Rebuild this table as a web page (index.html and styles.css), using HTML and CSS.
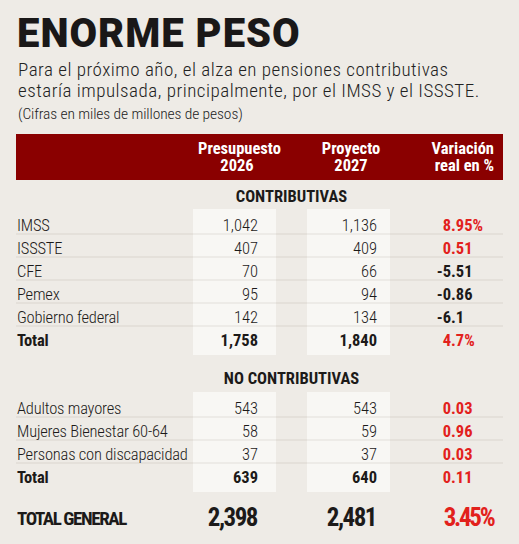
FILE: index.html
```html
<!DOCTYPE html>
<html lang="es">
<head>
<meta charset="utf-8">
<link rel="stylesheet" href="styles.css">
</head>
<body>
<div class="page">
  <h1 class="title">ENORME PESO</h1>
  <p class="lede">Para el próximo año, el alza en pensiones contributivas<br>estaría impulsada, principalmente, por el IMSS y el ISSSTE.</p>
  <p class="note">(Cifras en miles de millones de pesos)</p>

  <div class="table">
    <div class="row head">
      <div class="cell"></div>
      <div class="cell hc">Presupuesto<br>2026</div>
      <div class="cell"></div>
      <div class="cell hc">Proyecto<br>2027</div>
      <div class="cell hv">Variación<br>real en %</div>
    </div>

    <div class="row stitle"><div class="cell"></div><div class="cell span3">CONTRIBUTIVAS</div><div class="cell"></div></div>
    <div class="row cap top"><div class="cell"></div><div class="cell box"></div><div class="cell"></div><div class="cell box"></div><div class="cell"></div></div>
    <div class="row sep"><div class="cell lab">IMSS</div><div class="cell box n1">1,042</div><div class="cell"></div><div class="cell box n2">1,136</div><div class="cell var red"><span class="int">8</span>.95%</div></div>
    <div class="row sep"><div class="cell lab">ISSSTE</div><div class="cell box n1">407</div><div class="cell"></div><div class="cell box n2">409</div><div class="cell var red"><span class="int">0</span>.51</div></div>
    <div class="row sep"><div class="cell lab">CFE</div><div class="cell box n1">70</div><div class="cell"></div><div class="cell box n2">66</div><div class="cell var"><span class="int">-5</span>.51</div></div>
    <div class="row sep"><div class="cell lab">Pemex</div><div class="cell box n1">95</div><div class="cell"></div><div class="cell box n2">94</div><div class="cell var"><span class="int">-0</span>.86</div></div>
    <div class="row sep"><div class="cell lab">Gobierno federal</div><div class="cell box n1">142</div><div class="cell"></div><div class="cell box n2">134</div><div class="cell var"><span class="int">-6</span>.1</div></div>
    <div class="row total"><div class="cell lab">Total</div><div class="cell box n1">1,758</div><div class="cell"></div><div class="cell box n2">1,840</div><div class="cell var red"><span class="int">4</span>.7%</div></div>
    <div class="row cap bottom"><div class="cell"></div><div class="cell box"></div><div class="cell"></div><div class="cell box"></div><div class="cell"></div></div>

    <div class="row stitle second"><div class="cell"></div><div class="cell span3">NO CONTRIBUTIVAS</div><div class="cell"></div></div>
    <div class="row cap top"><div class="cell"></div><div class="cell box"></div><div class="cell"></div><div class="cell box"></div><div class="cell"></div></div>
    <div class="row sep"><div class="cell lab">Adultos mayores</div><div class="cell box n1">543</div><div class="cell"></div><div class="cell box n2">543</div><div class="cell var red"><span class="int">0</span>.03</div></div>
    <div class="row sep"><div class="cell lab">Mujeres Bienestar 60-64</div><div class="cell box n1">58</div><div class="cell"></div><div class="cell box n2">59</div><div class="cell var red"><span class="int">0</span>.96</div></div>
    <div class="row sep"><div class="cell lab">Personas con discapacidad</div><div class="cell box n1">37</div><div class="cell"></div><div class="cell box n2">37</div><div class="cell var red"><span class="int">0</span>.03</div></div>
    <div class="row total"><div class="cell lab">Total</div><div class="cell box n1">639</div><div class="cell"></div><div class="cell box n2">640</div><div class="cell var red"><span class="int">0</span>.11</div></div>
    <div class="row cap bottom"><div class="cell"></div><div class="cell box"></div><div class="cell"></div><div class="cell box"></div><div class="cell"></div></div>

    <div class="row grand"><div class="cell lab">TOTAL GENERAL</div><div class="cell n1">2,398</div><div class="cell"></div><div class="cell n2">2,481</div><div class="cell var red"><span class="int">3</span>.45%</div></div>
  </div>
</div>
</body>
</html>
```
FILE: styles.css
```css
html, body {
  margin: 0;
  padding: 0;
  background: #eeebe6;
}
.page {
  width: 519px;
  height: 544px;
  box-sizing: border-box;
  padding: 14px 16px 0 16px;
  color: #1c1a19;
  font-family: Roboto, "Liberation Sans", sans-serif;
  overflow: hidden;
}
.title {
  margin: 0 0 0 1px;
  font-size: 40px;
  line-height: 40px;
  font-weight: 900;
  letter-spacing: 1px;
  color: #1a1818;
}
.lede {
  margin: 6px 0 0 2px;
  font-size: 19px;
  line-height: 20.5px;
  font-weight: 300;
  font-stretch: 75%;
  letter-spacing: 0.5px;
  color: #222;
  white-space: nowrap;
}
.note {
  margin: 4px 0 0 2px;
  font-size: 15.5px;
  line-height: 18px;
  font-weight: 300;
  font-stretch: 75%;
  letter-spacing: -0.1px;
  color: #222;
}
.table {
  margin-top: 11px;
  width: 487px;
}
.row {
  display: grid;
  grid-template-columns: 177px 83px 31px 83px 113px;
  font-stretch: 75%;
}
.head {
  background: #8a0000;
  color: #fff;
  height: 46px;
  align-items: center;
  font-weight: 700;
  font-size: 16.5px;
  line-height: 17.5px;
  font-stretch: 75%;
}
.hc {
  text-align: center;
  padding-left: 5px;
}
.hv {
  text-align: right;
  padding-right: 9px;
}
.stitle {
  font-weight: 700;
  font-size: 16.5px;
  line-height: 20px;
  font-stretch: 75%;
  padding-top: 7px;
  height: 29px;
  box-sizing: border-box;
}
.stitle.second {
  height: 37px;
  padding-top: 14px;
}
.span3 {
  grid-column: span 3;
  text-align: center;
}
.box {
  background: #f8f7f4;
}
.cap.top .cell { height: 3px; }
.cap.bottom .cell { height: 5px; }
.sep .cell, .total .cell {
  font-size: 16.5px;
  line-height: 15.5px;
  padding-top: 5.5px;
  font-weight: 300;
}
.sep .cell {
  border-bottom: 2px solid rgba(60, 45, 30, 0.06);
}
.lab {
  padding-left: 1px;
  white-space: nowrap;
  letter-spacing: -0.2px;
}
.total .cell {
  font-weight: 700;
  height: 23px;
  box-sizing: border-box;
}
.n1 {
  text-align: right;
  padding-right: 18px;
}
.n2 {
  text-align: right;
  padding-right: 13px;
}
.var {
  font-weight: 700 !important;
  white-space: nowrap;
}
.int {
  display: inline-block;
  width: 61px;
  text-align: right;
}
.red {
  color: #e2211c;
}
.grand {
  margin-top: 13px;
  align-items: end;
  font-weight: 700;
}
.grand .lab {
  font-size: 19px;
  line-height: 22px;
  letter-spacing: -1.4px;
}
.grand .n1, .grand .n2, .grand .var {
  font-size: 25px;
  line-height: 25px;
  letter-spacing: -1.5px;
}
.grand .var {
  letter-spacing: -2.3px;
}
.grand .n1 { padding-right: 19px; }
.grand .n2 { padding-right: 14px; }
.grand .int {
  width: 64px;
}
```
